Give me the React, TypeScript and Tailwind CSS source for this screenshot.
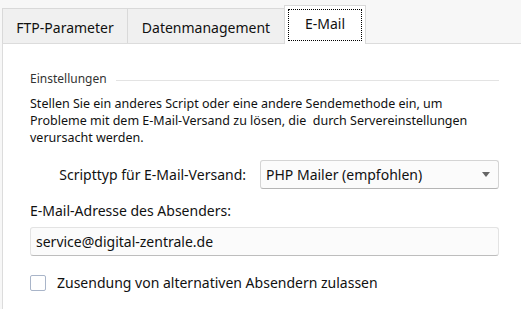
import React, { useState } from 'react';

const tabs = ['FTP-Parameter', 'Datenmanagement', 'E-Mail'];

const App = () => {
    const [active, setActive] = useState(2);
    const [allowAlt, setAllowAlt] = useState(false);

    return (
        <div className="w-[521px] h-[309px] overflow-hidden bg-[#f7f7f7] pl-[2px] pt-[5px] font-['Noto_Sans',sans-serif] text-[#111]">
            {/* Tab strip */}
            <div className="flex items-end h-[38px]">
                {tabs.map((t, i) =>
                    i === active ? (
                        <div
                            key={t}
                            className="relative z-10 h-[39px] -mb-px w-[82px] bg-white border border-b-0 border-[#d9d9d9] p-[3px]"
                        >
                            <div className="h-full border border-dotted border-black flex items-center justify-center text-[14px] pb-[4px]">
                                {t}
                            </div>
                        </div>
                    ) : (
                        <div
                            key={t}
                            onClick={() => setActive(i)}
                            className={`h-[35px] bg-[#f0f0f0] border-t border-l border-[#d9d9d9] flex items-center justify-center text-[14px] pt-[2px] cursor-pointer ${i === 0 ? 'w-[125px]' : 'w-[157px]'}`}
                        >
                            {t}
                        </div>
                    )
                )}
            </div>

            {/* Panel */}
            <div className="h-[270px] bg-white border-t border-l border-[#dcdcdc] pl-[27px] pr-[22px] pt-[25px]">
                {/* Group header */}
                <div className="flex items-center gap-[9px]">
                    <span className="text-[12px] text-[#333] leading-[20px]">Einstellungen</span>
                    <div className="flex-1 h-px bg-[#e3e3e3] mt-[2px]" />
                </div>

                <p className="mt-[6px] text-[12.5px] leading-[17px] text-[#111] whitespace-nowrap">
                    <span className="block">Stellen Sie ein anderes Script oder eine andere Sendemethode ein, um</span>
                    <span className="block">Probleme mit dem E-Mail-Versand zu lösen, die&nbsp; durch Servereinstellungen</span>
                    <span className="block">verursacht werden.</span>
                </p>

                {/* Script type */}
                <div className="flex items-center mt-[14px]">
                    <label className="w-[230px] text-right pr-[14px] text-[14px]">Scripttyp für E-Mail-Versand:</label>
                    <div className="flex-1 h-[29px] flex items-center justify-between pl-[5px] pr-[8px] bg-[#fbfbfb] border border-[#d4d4d4] border-b-[#b5b5b5] rounded-[3px] text-[14px]">
                        <span>PHP Mailer (empfohlen)</span>
                        <svg width="8" height="5" viewBox="0 0 8 5">
                            <path d="M0 0 L8 0 L4 5 Z" fill="#666" />
                        </svg>
                    </div>
                </div>

                {/* Sender address */}
                <div className="mt-[12px] text-[14px] leading-[20px]">E-Mail-Adresse des Absenders:</div>
                <div className="mt-[6px] h-[29px] flex items-center pl-[5px] bg-[#fbfbfb] border border-[#e3e3e3] border-b-[#bdbdbd] rounded-[3px] text-[14px]">
                    service@digital-zentrale.de
                </div>

                {/* Checkbox */}
                <div className="mt-[16px] flex items-center gap-[11px] cursor-pointer" onClick={() => setAllowAlt(!allowAlt)}>
                    <div className="w-[16px] h-[16px] border border-[#a9b5c9] rounded-[2px] bg-white flex items-center justify-center">
                        {allowAlt && (
                            <svg width="10" height="8" viewBox="0 0 10 8">
                                <path d="M1 4 L4 7 L9 1" stroke="#1a5fb4" strokeWidth="1.5" fill="none" />
                            </svg>
                        )}
                    </div>
                    <span className="text-[14px]">Zusendung von alternativen Absendern zulassen</span>
                </div>
            </div>
        </div>
    );
};

export default App;
